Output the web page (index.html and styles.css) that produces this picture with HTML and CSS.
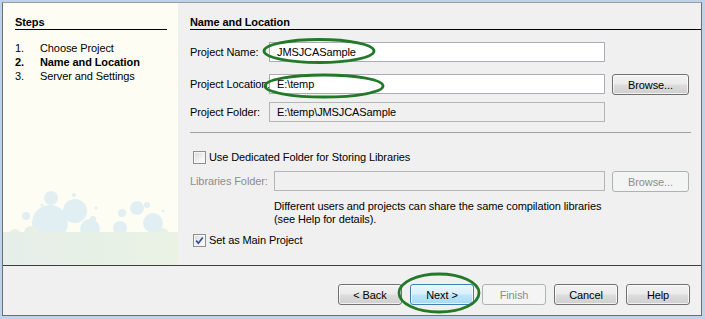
FILE: index.html
```html
<!DOCTYPE html>
<html lang="en">
<head>
    <meta charset="UTF-8">
    <meta name="viewport" content="width=device-width, initial-scale=1.0">
    <title>New Project - Name and Location</title>
    <link rel="stylesheet" href="styles.css">
</head>
<body>
    <div class="dialog">
        <div class="wizard-main">
            <div class="steps-panel">
                <h2 class="panel-title">Steps</h2>
                <ol class="steps">
                    <li><span class="step-num">1.</span>Choose Project</li>
                    <li class="current"><span class="step-num">2.</span>Name and Location</li>
                    <li><span class="step-num">3.</span>Server and Settings</li>
                </ol>
                <!-- decorative bubbles at the bottom of the steps panel -->
                <svg class="bubbles" width="175" height="75" viewBox="0 0 175 75">
                    <defs>
                        <linearGradient id="ground" x1="0" y1="0" x2="1" y2="0">
                            <stop offset="0" stop-color="#e6eee9"/>
                            <stop offset="1" stop-color="#e9f2e3"/>
                        </linearGradient>
                    </defs>
                    <g fill="#e2eff2">
                        <circle cx="48" cy="8" r="7"/>
                        <circle cx="47" cy="33" r="18"/>
                        <circle cx="72" cy="21" r="12"/>
                        <circle cx="23" cy="26" r="4"/>
                        <circle cx="71" cy="5" r="2"/>
                        <circle cx="39" cy="15" r="1.5"/>
                        <circle cx="93" cy="18" r="1.5"/>
                        <circle cx="90" cy="29" r="3"/>
                        <circle cx="87" cy="39" r="10"/>
                        <circle cx="117" cy="38" r="7"/>
                        <circle cx="119" cy="23" r="4"/>
                        <circle cx="134" cy="18" r="7"/>
                        <circle cx="144" cy="15" r="3"/>
                        <circle cx="150" cy="33" r="10"/>
                        <circle cx="160" cy="21" r="1.5"/>
                    </g>
                    <g fill="url(#ground)">
                        <circle cx="12" cy="45" r="6"/>
                        <circle cx="28" cy="43" r="7"/>
                        <circle cx="160" cy="44" r="6"/>
                        <rect x="0" y="42" width="175" height="33"/>
                    </g>
                </svg>
            </div>

            <div class="content-panel">
                <h2 class="panel-title">Name and Location</h2>

                <div class="field-row first">
                    <label class="field-label">Project Name:</label>
                    <input class="text-field" type="text" value="JMSJCASample">
                </div>
                <div class="field-row">
                    <label class="field-label">Project Location:</label>
                    <input class="text-field" type="text" value="E:\temp">
                    <button class="btn browse">Browse...</button>
                </div>
                <div class="field-row folder">
                    <label class="field-label">Project Folder:</label>
                    <input class="text-field" type="text" value="E:\temp\JMSJCASample" disabled>
                </div>

                <div class="separator"></div>

                <label class="check-row">
                    <span class="checkbox"></span>
                    Use Dedicated Folder for Storing Libraries
                </label>
                <div class="field-row libs">
                    <label class="field-label muted">Libraries Folder:</label>
                    <input class="text-field" type="text" disabled>
                    <button class="btn browse" disabled>Browse...</button>
                </div>
                <p class="hint">Different users and projects can share the same compilation libraries<br>(see Help for details).</p>

                <label class="check-row main-project">
                    <span class="checkbox">
                        <svg width="11" height="11" viewBox="0 0 11 11"><path d="M2.2 5.6 L4.4 8.2 L8.8 2.4" fill="none" stroke="#2f4f96" stroke-width="1.7"/></svg>
                    </span>
                    Set as Main Project
                </label>
            </div>
        </div>

        <div class="button-bar">
            <button class="btn">&lt; Back</button>
            <button class="btn default">Next &gt;</button>
            <button class="btn" disabled>Finish</button>
            <button class="btn">Cancel</button>
            <button class="btn">Help</button>
        </div>
    </div>

    <!-- hand-drawn highlight marks over the screenshot -->
    <svg class="annotations" width="705" height="319" viewBox="0 0 705 319">
        <g fill="none" stroke="#23792a" stroke-width="2.8">
            <ellipse cx="319" cy="51" rx="55" ry="11.5"/>
            <ellipse cx="324" cy="86" rx="59" ry="11"/>
            <ellipse cx="439" cy="293" rx="40" ry="19"/>
        </g>
    </svg>
</body>
</html>
```

FILE: styles.css
```css
* {
    margin: 0;
    padding: 0;
    box-sizing: border-box;
}

body {
    width: 705px;
    height: 319px;
    padding: 2px 3px 3px 2px;
    background: #bed2ea;
    font-family: "Liberation Sans", Arial, sans-serif;
    font-size: 11px;
    letter-spacing: -0.1px;
    color: #000;
    position: relative;
    overflow: hidden;
}

.dialog {
    width: 700px;
    height: 314px;
    border: 1px solid #6e6e6e;
    border-top-color: #9c9c9c;
    background: #f0f0f0;
    display: flex;
    flex-direction: column;
}

.wizard-main {
    display: flex;
    height: 263px;
    border-bottom: 1px solid #3f3f3f;
}

.panel-title {
    font-size: 11px;
    font-weight: bold;
    line-height: 14px;
    border-bottom: 1px solid #000;
    margin-top: 12px;
}

/* steps */

.steps-panel {
    width: 175px;
    background: #fdfdf4;
    display: flex;
    flex-direction: column;
}

.steps-panel .panel-title {
    margin-left: 12px;
    margin-right: 11px;
}

.steps {
    list-style: none;
    margin: 11px 0 0 12px;
    line-height: 14px;
}

.steps li.current {
    font-weight: bold;
}

.step-num {
    display: inline-block;
    width: 25px;
}

.bubbles {
    display: block;
    margin-top: auto;
}

/* form */

.content-panel {
    flex: 1;
    padding-left: 12px;
}

.field-row {
    display: flex;
    align-items: flex-start;
    margin-top: 12px;
}

.field-row.folder {
    margin-top: 7px;
}

.field-label {
    width: 79px;
    flex-shrink: 0;
    white-space: nowrap;
    line-height: 20px;
}

.field-label.muted {
    color: #8d8d8d;
}

.text-field {
    width: 336px;
    height: 20px;
    border: 1px solid #abadb3;
    background: #fff;
    padding: 0 7px;
    font: inherit;
    letter-spacing: inherit;
    color: #000;
    outline: none;
}

.text-field:disabled {
    background: #f0f0f0;
    border-color: #b5b5b5;
    color: #000;
}

.separator {
    height: 1px;
    background: #a0a0a0;
    margin: 10px 10px 0 0;
}

.check-row {
    display: flex;
    align-items: center;
    height: 14px;
    margin-top: 17px;
    padding-left: 3px;
}

.checkbox {
    width: 13px;
    height: 13px;
    margin-right: 3px;
    border: 1px solid #8e8f8f;
    background: linear-gradient(135deg, #d8d8d8 0%, #f2f2f2 60%, #fdfdfd 100%);
    box-shadow: inset 0 0 0 1px #f6f6f6;
    display: flex;
    align-items: center;
    justify-content: center;
}

.checkbox svg {
    display: block;
}

.field-row.libs {
    margin-top: 7px;
}

.field-row.libs .field-label {
    width: 84px;
}

.field-row.libs .text-field {
    width: 331px;
}

.hint {
    margin: 8px 0 0 84px;
    line-height: 13px;
}

.check-row.main-project {
    margin-top: 7px;
}

/* buttons */

.btn {
    width: 64px;
    height: 21px;
    border: 1px solid #707070;
    border-radius: 3px;
    background: linear-gradient(#f2f2f2 0%, #ebebeb 48%, #dddddd 52%, #cfcfcf 100%);
    box-shadow: inset 0 0 0 1px rgba(255, 255, 255, 0.7);
    font: inherit;
    letter-spacing: inherit;
    color: #000;
}

.btn.browse {
    width: 77px;
    margin-left: 7px;
}

.btn.default {
    border-color: #3c7fb1;
    background: linear-gradient(#eaf6fd 0%, #d9f0fc 48%, #bee6fd 52%, #a7d9f5 100%);
}

.btn:disabled {
    border-color: #adb2b5;
    background: #f4f4f4;
    box-shadow: none;
    color: #8d8d8d;
}

.button-bar {
    flex: 1;
    display: flex;
    justify-content: flex-end;
    align-items: flex-start;
    gap: 8px;
    padding: 18px 11px 0 0;
}

.annotations {
    position: absolute;
    left: 0;
    top: 0;
    pointer-events: none;
}
```
